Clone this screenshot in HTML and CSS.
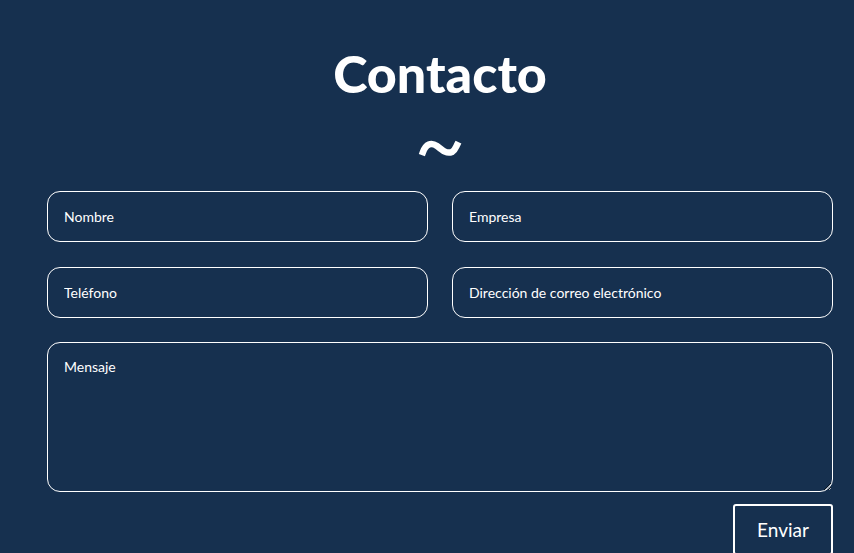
FILE: index.html
```html
<!DOCTYPE html>
<html lang="es">
<head>
<meta charset="utf-8">
<link rel="stylesheet" href="styles.css">
</head>
<body>
<section class="contact">
  <h1 class="title">Contacto</h1>
  <div class="wave">
    <svg width="44" height="20" viewBox="0 0 44 20"><path d="M5 14 C8 6 13 4 19 8 C25 13 29 16 34 14 C37 12 38 9 39 7" fill="none" stroke="#fff" stroke-width="6.5" stroke-linecap="square" stroke-linejoin="round"/></svg>
  </div>
  <form class="form">
    <div class="row">
      <input class="field" type="text" placeholder="Nombre">
      <input class="field" type="text" placeholder="Empresa">
    </div>
    <div class="row">
      <input class="field" type="text" placeholder="Teléfono">
      <input class="field" type="text" placeholder="Dirección de correo electrónico">
    </div>
    <textarea class="field message" placeholder="Mensaje"></textarea>
    <div class="actions">
      <button class="send" type="button">Enviar</button>
    </div>
  </form>
</section>
</body>
</html>
```
FILE: styles.css
```css
html, body {
  margin: 0;
  padding: 0;
  background: #16304f;
  height: 100%;
  overflow: hidden;
}
body {
  font-family: Lato, "Open Sans", sans-serif;
  color: #fff;
}
.contact {
  width: 786px;
  padding: 43px 0 0 47px;
}
.title {
  margin: 0;
  text-align: center;
  font-size: 52px;
  font-weight: 900;
  line-height: 60px;
}
.wave {
  display: flex;
  justify-content: center;
  margin-top: 35px;
  height: 20px;
}
.form {
  margin-top: 33px;
  display: flex;
  flex-direction: column;
  gap: 25px;
}
.row {
  display: flex;
  gap: 24px;
}
.field {
  box-sizing: border-box;
  flex: 1;
  height: 51px;
  background: transparent;
  border: 1px solid #fff;
  border-radius: 13px;
  padding: 0 16px;
  font-family: Lato, sans-serif;
  font-size: 14px;
  color: #fff;
  outline: none;
}
.field::placeholder {
  color: #fff;
  opacity: 1;
}
.message {
  flex: none;
  height: 150px;
  width: 786px;
  margin-top: -1px;
  padding: 15px 16px;
  resize: vertical;
  display: block;
}
.actions {
  display: flex;
  justify-content: flex-end;
  margin-top: -13px;
}
.send {
  width: 100px;
  height: 51px;
  background: transparent;
  border: 2px solid #fff;
  border-radius: 3px;
  color: #fff;
  font-family: Lato, sans-serif;
  font-size: 19px;
  padding: 0;
}
```
